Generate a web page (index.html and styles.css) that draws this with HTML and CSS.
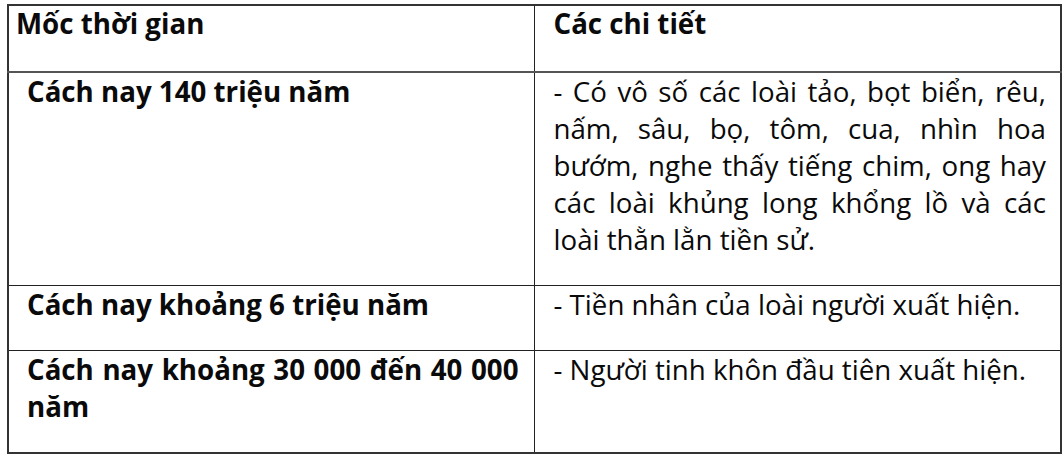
FILE: index.html
```html
<!DOCTYPE html>
<html lang="vi">
<head>
<meta charset="utf-8">
<link rel="stylesheet" href="styles.css">
</head>
<body>
<table class="timeline">
  <colgroup><col class="col-left"><col class="col-right"></colgroup>
  <tr class="row-head">
    <th class="cell-left head-left">Mốc thời gian</th>
    <th class="cell-right">Các chi tiết</th>
  </tr>
  <tr class="row-1">
    <td class="cell-left">Cách nay 140 triệu năm</td>
    <td class="cell-right">- Có vô số các loài tảo, bọt biển, rêu, nấm, sâu, bọ, tôm, cua, nhìn hoa bướm, nghe thấy tiếng chim, ong hay các loài khủng long khổng lồ và các loài thằn lằn tiền sử.</td>
  </tr>
  <tr class="row-2">
    <td class="cell-left">Cách nay khoảng 6 triệu năm</td>
    <td class="cell-right">- Tiền nhân của loài người xuất hiện.</td>
  </tr>
  <tr class="row-3">
    <td class="cell-left wide-words">Cách nay khoảng 30 000 đến 40 000 năm</td>
    <td class="cell-right">- Người tinh khôn đầu tiên xuất hiện.</td>
  </tr>
</table>
</body>
</html>
```

FILE: styles.css
```css
html, body {
  margin: 0;
  padding: 0;
  background: #fff;
}
body {
  padding: 4px 0 0 7px;
  font-family: "Open Sans", "Noto Sans", sans-serif;
  color: #0a0a0a;
}
.timeline {
  border-collapse: collapse;
  table-layout: fixed;
  width: 1053px;
  border: 2px solid #333;
}
.col-left { width: 526px; }
.col-right { width: 527px; }
.timeline th, .timeline td {
  border: 1px solid #222;
  vertical-align: top;
  font-size: 27.7px;
  line-height: 37px;
  padding-top: 0;
  padding-bottom: 0;
  text-align: left;
}
.timeline th {
  line-height: 34px;
}
.cell-left {
  font-weight: 700;
  padding-left: 18px;
  padding-right: 8px;
}
.head-left {
  padding-left: 7px;
}
.wide-words {
  word-spacing: 1.4px;
}
.timeline th.cell-right {
  font-weight: 700;
}
.cell-right {
  font-weight: 400;
  padding-left: 19px;
  padding-right: 14px;
}
.timeline td.cell-right { text-align: justify; }
.row-head { height: 67px; }
.row-head th { border-bottom: 2px solid #555; }
.row-1 { height: 213px; }
.row-2 { height: 65px; }
.row-3 { height: 103px; }
```
